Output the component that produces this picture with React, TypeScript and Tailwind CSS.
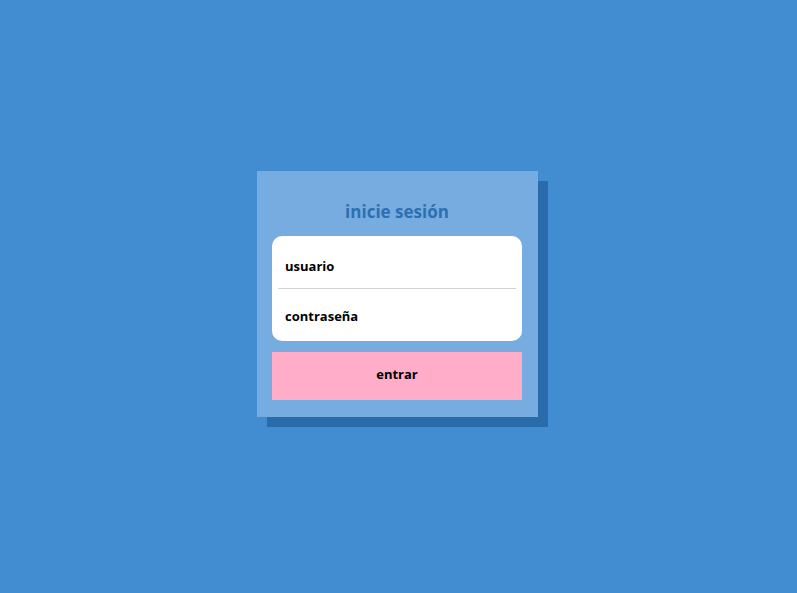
export default function App() {
  return (
    <div className="flex h-[593px] w-full items-center justify-center bg-[#428dd1] pb-[5px] pr-[2px] font-['Open_Sans','Lato',sans-serif]">
      <div className="relative">
        <div className="absolute left-[10px] top-[10px] h-full w-full bg-[#2a6bab]" />
        <form className="relative w-[281px] bg-[#76acdf] pb-[17px] pl-[15px] pr-[16px] pt-[30px]" onSubmit={e => e.preventDefault()}>
          <h1 className="text-center text-[17px] font-bold leading-[22px] text-[#2d6fb2]">inicie sesión</h1>
          <div className="mt-[13px] rounded-[10px] bg-white">
            <input
              placeholder="usuario"
              className="block h-[52px] w-full bg-transparent px-[13px] pt-[8px] text-[13px] font-bold text-black outline-none placeholder:text-black"
            />
            <div className="mx-[6px] h-px bg-[#d2d2d2]" />
            <input
              type="password"
              placeholder="contraseña"
              className="block h-[52px] w-full bg-transparent px-[13px] pt-[2px] text-[13px] font-bold text-black outline-none placeholder:text-black"
            />
          </div>
          <button type="submit" className="mt-[11px] block h-[48px] w-full bg-[#ffadc9] pb-[2px] text-[13px] font-bold text-black">
            entrar
          </button>
        </form>
      </div>
    </div>
  )
}
